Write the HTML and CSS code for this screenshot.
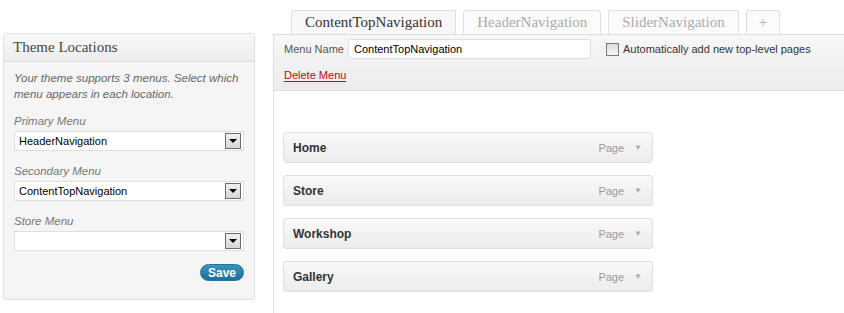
FILE: index.html
```html
<!DOCTYPE html>
<html lang="en">
<head>
    <meta charset="UTF-8">
    <title>Menus</title>
    <link rel="stylesheet" href="styles.css">
</head>
<body>
    <div class="wrap">
        <div class="sidebar">
            <div class="box-head">Theme Locations</div>
            <div class="box-body">
                <p class="desc">Your theme supports 3 menus. Select which menu appears in each location.</p>

                <label class="loc-label">Primary Menu</label>
                <div class="select">
                    <span>HeaderNavigation</span>
                    <span class="select-btn"></span>
                </div>

                <label class="loc-label">Secondary Menu</label>
                <div class="select">
                    <span>ContentTopNavigation</span>
                    <span class="select-btn"></span>
                </div>

                <label class="loc-label">Store Menu</label>
                <div class="select">
                    <span></span>
                    <span class="select-btn"></span>
                </div>

                <div class="save-row">
                    <button class="save-btn">Save</button>
                </div>
            </div>
        </div>

        <div class="main">
            <div class="tabs">
                <div class="tab active">ContentTopNavigation</div>
                <div class="tab">HeaderNavigation</div>
                <div class="tab">SliderNavigation</div>
                <div class="tab plus">+</div>
            </div>
            <div class="panel">
                <div class="panel-head">
                    <div class="name-row">
                        <span class="name-label">Menu Name</span>
                        <input class="name-input" type="text" value="ContentTopNavigation">
                        <span class="check"></span>
                        <span class="check-label">Automatically add new top-level pages</span>
                    </div>
                    <a class="delete-link" href="#">Delete Menu</a>
                </div>
                <div class="items">
                    <div class="item"><span class="item-title">Home</span><span class="item-type">Page</span><span class="item-arrow">&#9660;</span></div>
                    <div class="item"><span class="item-title">Store</span><span class="item-type">Page</span><span class="item-arrow">&#9660;</span></div>
                    <div class="item"><span class="item-title">Workshop</span><span class="item-type">Page</span><span class="item-arrow">&#9660;</span></div>
                    <div class="item"><span class="item-title">Gallery</span><span class="item-type">Page</span><span class="item-arrow">&#9660;</span></div>
                </div>
            </div>
        </div>
    </div>
</body>
</html>
```

FILE: styles.css
```css
* {
    margin: 0;
    padding: 0;
    box-sizing: border-box;
}

body {
    background-color: #fff;
    font-family: 'Liberation Sans', Arial, sans-serif;
    font-size: 12px;
    color: #333;
    overflow: hidden;
}

.wrap {
    display: flex;
    align-items: flex-start;
}

/* левая колонка */
.sidebar {
    width: 252px;
    margin: 33px 0 0 3px;
    border: 1px solid #dfdfdf;
    border-radius: 3px;
    background-color: #f5f5f5;
}

.box-head {
    height: 28px;
    padding-left: 9px;
    line-height: 27px;
    font-family: 'Liberation Serif', Georgia, serif;
    font-size: 15px;
    color: #464646;
    background: linear-gradient(#f9f9f9, #ececec);
    border-bottom: 1px solid #dfdfdf;
}

.box-body {
    padding: 8px 10px 18px 10px;
}

.desc {
    font-size: 11.5px;
    line-height: 16px;
    font-style: italic;
    color: #666;
}

.loc-label {
    display: block;
    margin-top: 11px;
    font-size: 11.5px;
    line-height: 16px;
    font-style: italic;
    color: #777;
}

.select + .loc-label {
    margin-top: 12px;
}

.select {
    display: flex;
    align-items: center;
    justify-content: space-between;
    height: 20px;
    margin-top: 2px;
    padding: 0 2px 0 4px;
    background-color: #fff;
    border: 1px solid #dfdfdf;
    font-size: 11px;
    color: #000;
}

.select-btn {
    position: relative;
    width: 16px;
    height: 16px;
    border: 1px solid #6b6b6b;
    background: linear-gradient(#f0f0f0, #d6d6d6);
}

.select-btn::after {
    content: '';
    position: absolute;
    left: 3px;
    top: 5px;
    border-left: 4px solid transparent;
    border-right: 4px solid transparent;
    border-top: 4px solid #000;
}

.save-row {
    display: flex;
    justify-content: flex-end;
    margin-top: 13px;
}

.save-btn {
    height: 17px;
    padding: 0 7px;
    border: 1px solid #21759b;
    border-radius: 9px;
    background: linear-gradient(#3a92c0, #1f6f96);
    color: #fff;
    font-family: 'Liberation Sans', Arial, sans-serif;
    font-size: 12px;
    font-weight: 700;
    line-height: 14px;
}

/* правая часть */
.main {
    flex: 1;
    margin: 10px 0 0 18px;
}

.tabs {
    display: flex;
    gap: 7px;
    padding-left: 18px;
    height: 24px;
}

.tab {
    height: 24px;
    padding: 0 13px;
    border: 1px solid #dfdfdf;
    border-bottom: none;
    border-radius: 3px 3px 0 0;
    background-color: #fbfbfb;
    font-family: 'Liberation Serif', Georgia, serif;
    font-size: 15px;
    line-height: 23px;
    color: #aaa;
}

.tab.active {
    background-color: #f7f7f7;
    color: #333;
}

.tab.plus {
    padding: 0 12px;
}

.panel {
    height: 279px;
    border-top: 1px solid #dfdfdf;
    border-left: 1px solid #dfdfdf;
}

.panel-head {
    height: 56px;
    padding: 4px 10px 0 10px;
    background: linear-gradient(#f7f7f7, #ececec);
    border-bottom: 1px solid #dfdfdf;
}

.name-row {
    display: flex;
    align-items: center;
    height: 20px;
}

.name-label {
    width: 64px;
    font-size: 11px;
    color: #555;
}

.name-input {
    width: 243px;
    height: 20px;
    padding: 0 5px;
    border: 1px solid #dfdfdf;
    border-radius: 3px;
    font-family: 'Liberation Sans', Arial, sans-serif;
    font-size: 11px;
    color: #000;
}

.check {
    width: 13px;
    height: 13px;
    margin: 0 4px 0 15px;
    border: 1px solid #7a7a7a;
    background: linear-gradient(#dcdcdc, #f6f6f6);
}

.check-label {
    font-size: 11px;
    color: #333;
}

.delete-link {
    display: inline-block;
    margin-top: 10px;
    font-size: 11px;
    line-height: 12px;
    color: #bc0b0b;
    text-decoration: none;
    border-bottom: 1px solid #bc0b0b;
}

.items {
    padding: 41px 0 0 9px;
}

.item {
    display: flex;
    align-items: center;
    width: 370px;
    height: 31px;
    margin-bottom: 12px;
    padding: 0 10px 0 9px;
    border: 1px solid #dfdfdf;
    border-radius: 3px;
    background: linear-gradient(#f9f9f9, #ececec);
}

.item-title {
    flex: 1;
    font-size: 12px;
    font-weight: 700;
    color: #333;
}

.item-type {
    font-size: 11px;
    color: #999;
}

.item-arrow {
    margin-left: 10px;
    font-size: 8px;
    color: #aaa;
}
```
